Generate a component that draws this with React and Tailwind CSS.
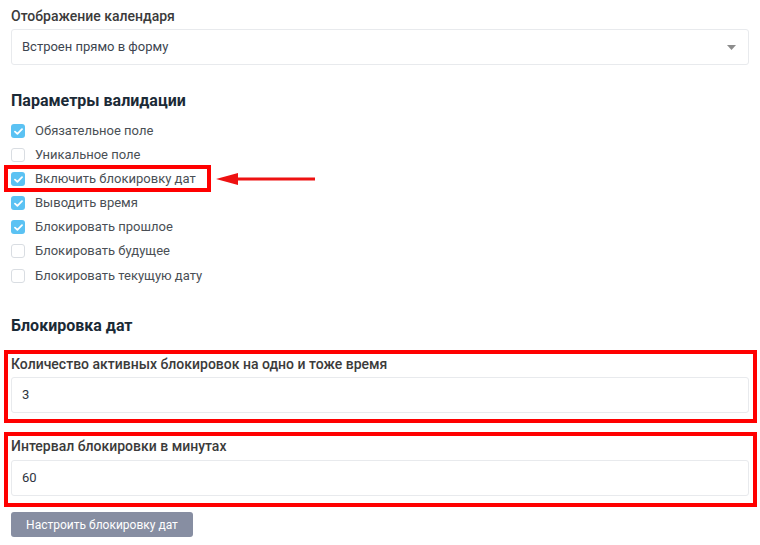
import React from "react";

function Check({ checked }) {
  if (checked) {
    return (
      <span className="flex h-[14px] w-[14px] shrink-0 items-center justify-center rounded-[3px] bg-[#5bc2f3]">
        <svg width="9" height="7" viewBox="0 0 9 7" fill="none">
          <path d="M1 3.6 L3.4 5.8 L8 1.2" stroke="white" strokeWidth="1.8" strokeLinecap="round" strokeLinejoin="round" />
        </svg>
      </span>
    );
  }
  return <span className="h-[14px] w-[14px] shrink-0 rounded-[3px] border border-[#d9dde2] bg-white" />;
}

const rows = [
  ["Обязательное поле", true],
  ["Уникальное поле", false],
  ["Включить блокировку дат", true],
  ["Выводить время", true],
  ["Блокировать прошлое", true],
  ["Блокировать будущее", false],
  ["Блокировать текущую дату", false],
];

export default function App() {
  return (
    <div className="relative h-[545px] w-[760px] overflow-hidden bg-white px-[11px] pt-[6px] font-['Roboto',sans-serif]">
      <div className="text-[14px] font-medium leading-[20px] text-[#3b3b3b]">Отображение календаря</div>
      <div className="mt-[3px] flex h-[36px] items-center justify-between rounded-[3px] border border-[#e8eaed] pl-[10px] pr-[12px]">
        <span className="text-[13px] text-[#3d4550]">Встроен прямо в форму</span>
        <svg width="9" height="5" viewBox="0 0 9 5"><path d="M0 0 H9 L4.5 5 Z" fill="#8c8c8c" /></svg>
      </div>

      <div className="mt-[24px] text-[16px] font-bold leading-[24px] text-[#1b2a36]">Параметры валидации</div>
      <div className="mt-[6px] flex flex-col">
        {rows.map(([t, c], i) => (
          <div key={i} className={"relative flex h-[24px] items-center gap-[10px]" + (i === 6 ? " mt-[1px]" : "")}>
            <Check checked={c} />
            <span className="text-[13px] text-[#4a4f55]">{t}</span>
            {i === 2 && (
              <>
                <div className="absolute left-[-7px] top-[-2px] h-[27px] w-[207px] border-4 border-[#ff0000]" />
                <svg className="absolute left-[205px] top-[6px]" width="100" height="12" viewBox="0 0 100 12">
                  <path d="M20 6 H99" stroke="#ee1111" strokeWidth="3" />
                  <path d="M0 6 L22 0 L22 12 Z" fill="#ee1111" />
                </svg>
              </>
            )}
          </div>
        ))}
      </div>

      <div className="mt-[26px] text-[16px] font-bold leading-[24px] text-[#1b2a36]">Блокировка дат</div>

      <div className="ml-[-7px] mr-[-8px] mt-[12px] border-4 border-[#ff0000] pb-[6px] pl-[3px] pr-[4px]">
        <div className="text-[14px] font-medium leading-[20px] text-[#3b3b3b]">Количество активных блокировок на одно и тоже время</div>
        <div className="mt-[3px] flex h-[36px] items-center rounded-[3px] border border-[#e8eaed] pl-[10px] text-[13px] text-[#2e3440]">3</div>
      </div>

      <div className="ml-[-7px] mr-[-8px] mt-[9px] border-4 border-[#ff0000] pb-[7px] pl-[3px] pr-[4px]">
        <div className="text-[14px] font-medium leading-[20px] text-[#3b3b3b]">Интервал блокировки в минутах</div>
        <div className="mt-[4px] flex h-[36px] items-center rounded-[3px] border border-[#e8eaed] pl-[10px] text-[13px] text-[#2e3440]">60</div>
      </div>

      <button className="mt-[5px] flex h-[25px] w-[182px] items-center justify-center rounded-[3px] bg-[#878ea2] text-[12px] text-white">
        Настроить блокировку дат
      </button>
    </div>
  );
}
